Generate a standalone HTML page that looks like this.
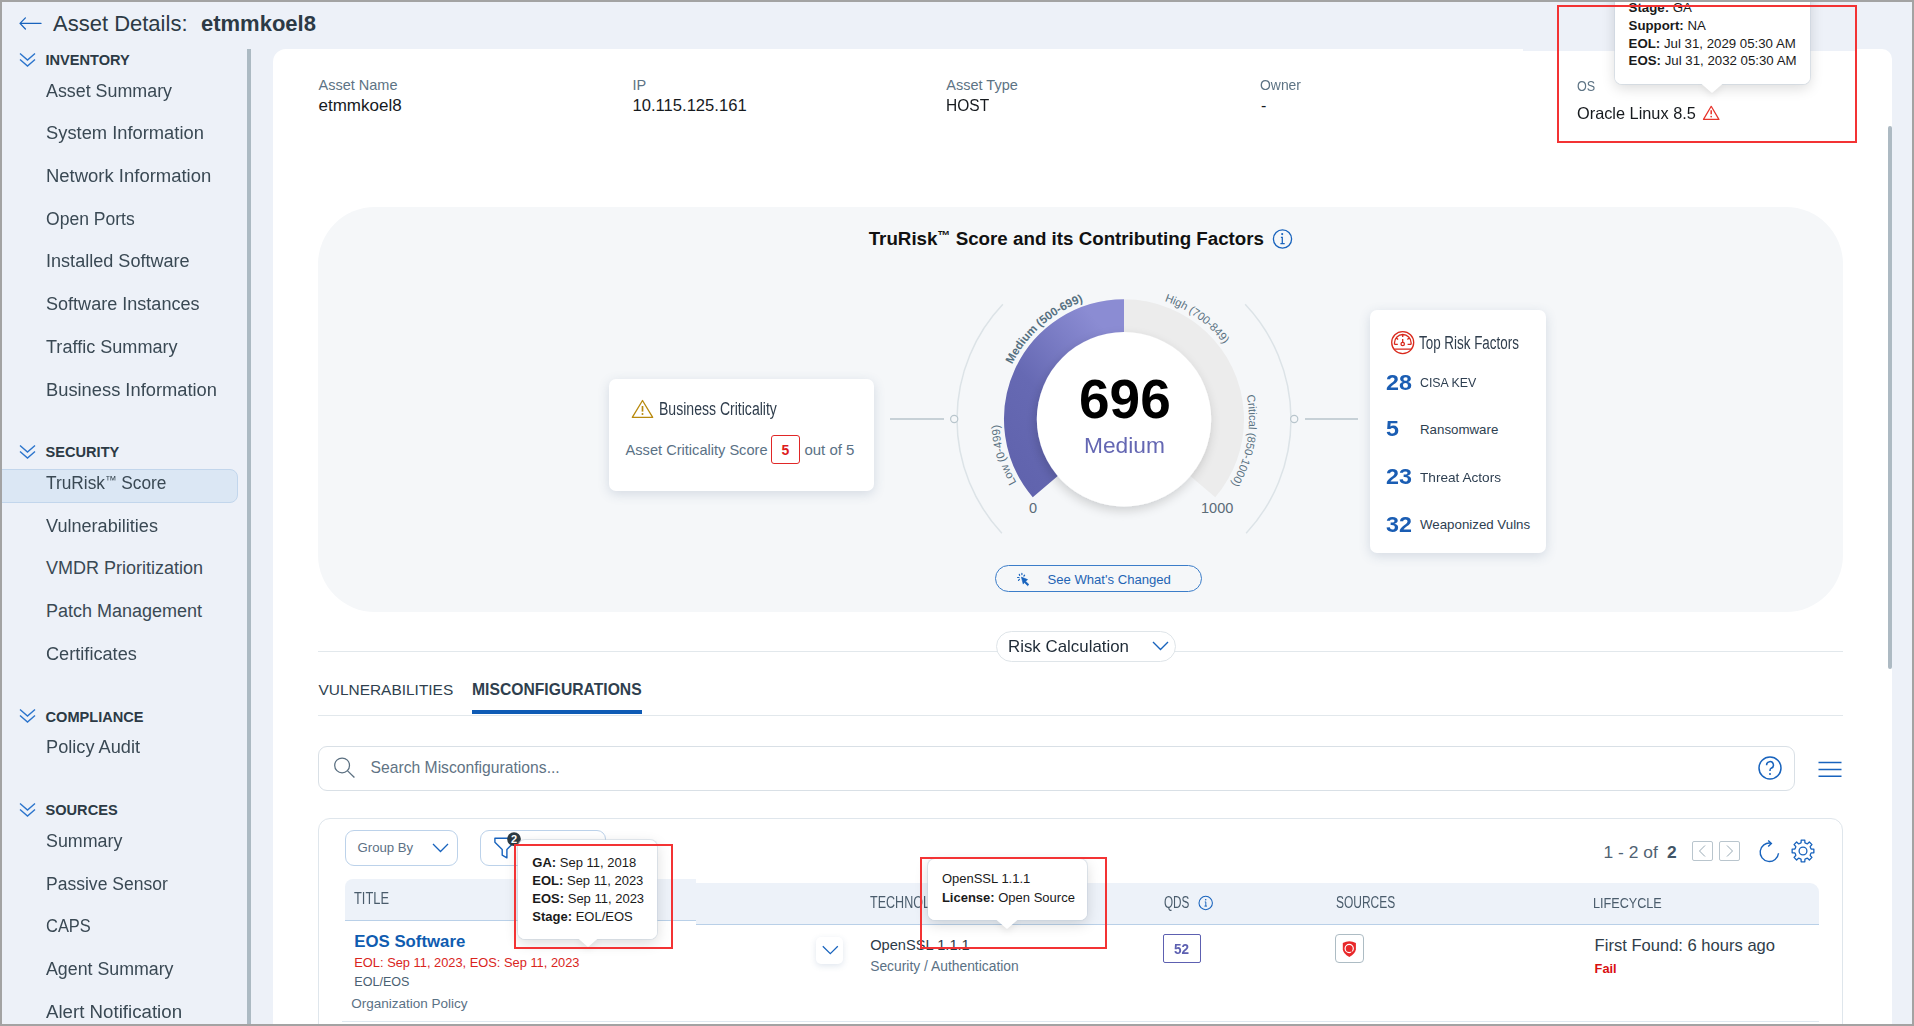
<!DOCTYPE html>
<html><head><meta charset="utf-8"><title>Asset Details</title>
<style>
html,body{margin:0;padding:0;}
body{width:1914px;height:1026px;overflow:hidden;position:relative;font-family:"Liberation Sans",sans-serif;background:#edf1f8;}
.t{position:absolute;line-height:1;white-space:nowrap;}
.r{position:absolute;}
svg{overflow:visible;}
svg text{font-family:"Liberation Sans",sans-serif;}
</style></head><body>
<div class="r" style="left:0px;top:0px;width:1914px;height:1026px;background:#edf1f8;"></div>
<svg class="r" style="left:18px;top:15px;" width="26" height="18" viewBox="0 0 26 18"><path d="M2.2 8.4H23M7.4 2.9L2 8.4L7.4 14" fill="none" stroke="#1863bd" stroke-width="1.25" stroke-linecap="round" stroke-linejoin="round"/></svg>
<div class="t " style="left:53px;top:13.00px;font-size:22px;color:#2c3a45;">Asset Details:</div>
<div class="t " style="left:201px;top:13.00px;font-size:22px;color:#2c3a45;font-weight:700;">etmmkoel8</div>
<div class="r" style="left:247px;top:49px;width:4px;height:980px;background:#acbac3;"></div>
<svg class="r" style="left:19px;top:51.7px;" width="17" height="15" viewBox="0 0 17 15"><path d="M1 1.5L8.5 8L16 1.5M1 7.5L8.5 14L16 7.5" fill="none" stroke="#2b74cc" stroke-width="1.4"/></svg>
<div class="t " style="left:45.5px;top:53.00px;font-size:14.6px;color:#2c3a45;font-weight:700;">INVENTORY</div>
<div class="t " style="left:46px;top:82.00px;font-size:18px;color:#3a4954;transform:scaleX(0.992);transform-origin:0 0;">Asset Summary</div>
<div class="t " style="left:46px;top:124.00px;font-size:18px;color:#3a4954;transform:scaleX(1.018);transform-origin:0 0;">System Information</div>
<div class="t " style="left:46px;top:167.00px;font-size:18px;color:#3a4954;transform:scaleX(1.026);transform-origin:0 0;">Network Information</div>
<div class="t " style="left:46px;top:210.00px;font-size:18px;color:#3a4954;transform:scaleX(0.975);transform-origin:0 0;">Open Ports</div>
<div class="t " style="left:46px;top:252.00px;font-size:18px;color:#3a4954;transform:scaleX(1.004);transform-origin:0 0;">Installed Software</div>
<div class="t " style="left:46px;top:295.00px;font-size:18px;color:#3a4954;transform:scaleX(1.003);transform-origin:0 0;">Software Instances</div>
<div class="t " style="left:46px;top:338.00px;font-size:18px;color:#3a4954;transform:scaleX(1.004);transform-origin:0 0;">Traffic Summary</div>
<div class="t " style="left:46px;top:381.00px;font-size:18px;color:#3a4954;transform:scaleX(1.017);transform-origin:0 0;">Business Information</div>
<svg class="r" style="left:19px;top:443.5px;" width="17" height="15" viewBox="0 0 17 15"><path d="M1 1.5L8.5 8L16 1.5M1 7.5L8.5 14L16 7.5" fill="none" stroke="#2b74cc" stroke-width="1.4"/></svg>
<div class="t " style="left:45.5px;top:445.00px;font-size:14.6px;color:#2c3a45;font-weight:700;">SECURITY</div>
<div class="r" style="left:-6px;top:469px;width:243.5px;height:34px;background:#dbe7f4;border:1px solid #c2d6ec;border-radius:8px;box-sizing:border-box;"></div>
<div class="t " style="left:46px;top:474.00px;font-size:18px;color:#3a4954;transform:scaleX(0.961);transform-origin:0 0;">TruRisk<span style="font-size:12px;position:relative;top:-5px">&#8482;</span> Score</div>
<div class="t " style="left:46px;top:517.00px;font-size:18px;color:#3a4954;transform:scaleX(1.005);transform-origin:0 0;">Vulnerabilities</div>
<div class="t " style="left:46px;top:559.00px;font-size:18px;color:#3a4954;transform:scaleX(1.0);transform-origin:0 0;">VMDR Prioritization</div>
<div class="t " style="left:46px;top:602.00px;font-size:18px;color:#3a4954;transform:scaleX(1.0);transform-origin:0 0;">Patch Management</div>
<div class="t " style="left:46px;top:645.00px;font-size:18px;color:#3a4954;transform:scaleX(1.009);transform-origin:0 0;">Certificates</div>
<svg class="r" style="left:19px;top:708.4000000000001px;" width="17" height="15" viewBox="0 0 17 15"><path d="M1 1.5L8.5 8L16 1.5M1 7.5L8.5 14L16 7.5" fill="none" stroke="#2b74cc" stroke-width="1.4"/></svg>
<div class="t " style="left:45.5px;top:710.00px;font-size:14.6px;color:#2c3a45;font-weight:700;">COMPLIANCE</div>
<div class="t " style="left:46px;top:738.00px;font-size:18px;color:#3a4954;transform:scaleX(1.01);transform-origin:0 0;">Policy Audit</div>
<svg class="r" style="left:19px;top:801.6px;" width="17" height="15" viewBox="0 0 17 15"><path d="M1 1.5L8.5 8L16 1.5M1 7.5L8.5 14L16 7.5" fill="none" stroke="#2b74cc" stroke-width="1.4"/></svg>
<div class="t " style="left:45.5px;top:803.00px;font-size:14.6px;color:#2c3a45;font-weight:700;">SOURCES</div>
<div class="t " style="left:46px;top:832.00px;font-size:18px;color:#3a4954;transform:scaleX(0.991);transform-origin:0 0;">Summary</div>
<div class="t " style="left:46px;top:875.00px;font-size:18px;color:#3a4954;transform:scaleX(0.974);transform-origin:0 0;">Passive Sensor</div>
<div class="t " style="left:46px;top:917.00px;font-size:18px;color:#3a4954;transform:scaleX(0.914);transform-origin:0 0;">CAPS</div>
<div class="t " style="left:46px;top:960.00px;font-size:18px;color:#3a4954;transform:scaleX(0.988);transform-origin:0 0;">Agent Summary</div>
<div class="t " style="left:46px;top:1003.00px;font-size:18px;color:#3a4954;transform:scaleX(1.038);transform-origin:0 0;">Alert Notification</div>
<div class="r" style="left:273px;top:49px;width:1619px;height:1000px;background:#fff;border-radius:13px 10px 0 0;"></div>
<div class="r" style="left:1523px;top:48px;width:334px;height:3px;background:#edf1f8;"></div>
<div class="r" style="left:1888px;top:126px;width:4px;height:543px;background:#adbac3;border-radius:2px;"></div>
<div class="t " style="left:318.5px;top:78.00px;font-size:14.5px;color:#5d7384;">Asset Name</div>
<div class="t " style="left:318.5px;top:97.00px;font-size:17px;color:#161a1e;">etmmkoel8</div>
<div class="t " style="left:632.5px;top:78.00px;font-size:14.5px;color:#5d7384;">IP</div>
<div class="t " style="left:632.5px;top:98.00px;font-size:16.6px;color:#161a1e;">10.115.125.161</div>
<div class="t " style="left:946.3px;top:78.00px;font-size:14.5px;color:#5d7384;">Asset Type</div>
<div class="t " style="left:946px;top:98.00px;font-size:16px;color:#161a1e;transform:scaleX(0.97);transform-origin:0 0;">HOST</div>
<div class="t " style="left:1260px;top:78.00px;font-size:14.5px;color:#5d7384;transform:scaleX(0.96);transform-origin:0 0;">Owner</div>
<div class="t " style="left:1261px;top:98.00px;font-size:16px;color:#161a1e;">-</div>
<div class="t " style="left:1577.4px;top:79.00px;font-size:14px;color:#5d7384;transform:scaleX(0.9);transform-origin:0 0;">OS</div>
<div class="t " style="left:1577.4px;top:105.00px;font-size:16.5px;color:#161a1e;transform:scaleX(0.989);transform-origin:0 0;">Oracle Linux 8.5</div>
<svg class="r" style="left:1702px;top:104px;" width="19" height="17" viewBox="0 0 19 17"><path d="M9.2 2.3L1.5 15.4H16.9Z" fill="none" stroke="#e6332b" stroke-width="1.25" stroke-linejoin="round"/><path d="M9.2 6.3V10.2" stroke="#e6332b" stroke-width="1.5"/><circle cx="9.2" cy="12.6" r="0.85" fill="#e6332b"/></svg>
<div class="r" style="left:318px;top:207px;width:1525px;height:405px;background:#f5f7f9;border-radius:57px;"></div>
<div class="t " style="left:868.7px;top:230.00px;font-size:18.75px;color:#111;font-weight:700;">TruRisk<span style="font-size:13px;position:relative;top:-5px">&#8482;</span> Score and its Contributing Factors</div>
<svg class="r" style="left:1272px;top:229px;" width="21" height="21" viewBox="0 0 21 21"><circle cx="10.5" cy="10" r="9.1" fill="none" stroke="#1863bd" stroke-width="1.3"/><circle cx="10.2" cy="5.1" r="1.05" fill="#1863bd"/><path d="M8.9 8.4H10.3V14.5M8.4 14.5H12.7" fill="none" stroke="#1863bd" stroke-width="1.25"/></svg>
<svg class="r" style="left:0px;top:0px;pointer-events:none;" width="1914" height="1026" viewBox="0 0 1914 1026"><defs><linearGradient id="pg" x1="0" y1="1" x2="0.7" y2="0"><stop offset="0" stop-color="#6063ad"/><stop offset="0.45" stop-color="#6669b3"/><stop offset="1" stop-color="#8b8cd3"/></linearGradient><filter id="sh" x="-30%" y="-30%" width="160%" height="160%"><feGaussianBlur in="SourceAlpha" stdDeviation="5.5"/><feOffset dx="-1.5" dy="4"/><feComponentTransfer><feFuncA type="linear" slope="0.17"/></feComponentTransfer><feMerge><feMergeNode/><feMergeNode in="SourceGraphic"/></feMerge></filter></defs><path d="M1001.86 533.19A167 167 0 0 1 1002.86 304.34" fill="none" stroke="#dce3e7" stroke-width="1.5"/><path d="M1245.14 304.34A167 167 0 0 1 1246.14 533.19" fill="none" stroke="#dce3e7" stroke-width="1.5"/><path d="M890 419H944M1305 419H1358" stroke="#b8c5cc" stroke-width="1.5"/><circle cx="954.2" cy="419" r="3.6" fill="#f5f7f9" stroke="#b8c5cc" stroke-width="1.2"/><circle cx="1294.2" cy="419" r="3.6" fill="#f5f7f9" stroke="#b8c5cc" stroke-width="1.2"/><path d="M1045.68 486.19A103 103 0 1 1 1202.32 486.19" fill="none" stroke="#ececec" stroke-width="34"/><path d="M1045.68 486.19A103 103 0 0 1 1124.00 316.30" fill="none" stroke="url(#pg)" stroke-width="34"/><circle cx="1124" cy="419.3" r="87.2" fill="#fff" filter="url(#sh)"/><path id="pl" d="M1094.87 540.65A124.8 124.8 0 0 1 1033.47 333.39" fill="none"/><text font-size="11.4" font-weight="400" fill="#5a7282"><textPath href="#pl" startOffset="50%" text-anchor="middle">Low (0-499)</textPath></text><path id="pm" d="M1002.00 444.12A124.5 124.5 0 0 1 1163.50 301.23" fill="none"/><text font-size="11.6" font-weight="700" fill="#557080"><textPath href="#pm" startOffset="50%" text-anchor="middle">Medium (500-699)</textPath></text><path id="ph" d="M1073.16 305.11A125 125 0 0 1 1248.32 432.37" fill="none"/><text font-size="11.2" font-weight="400" fill="#5a7282"><textPath href="#ph" startOffset="50%" text-anchor="middle">High (700-849)</textPath></text><path id="pc" d="M1204.35 323.54A125 125 0 0 1 1166.75 536.76" fill="none"/><text font-size="11.2" font-weight="400" fill="#5a7282"><textPath href="#pc" startOffset="50%" text-anchor="middle">Critical (850-1000)</textPath></text></svg>
<div class="t " style="left:1079px;top:372.00px;font-size:55px;color:#000;font-weight:700;transform:scaleX(1.0);transform-origin:0 0;">696</div>
<div class="t " style="left:1083.8px;top:435.00px;font-size:22.3px;color:#6467b3;transform:scaleX(1.02);transform-origin:0 0;">Medium</div>
<div class="t " style="left:1029px;top:501.00px;font-size:14.5px;color:#5b6b78;">0</div>
<div class="t " style="left:1201px;top:501.00px;font-size:14.5px;color:#5b6b78;">1000</div>
<div class="r" style="left:609px;top:379px;width:265px;height:112px;background:#fff;border-radius:7px;box-shadow:0 3px 12px rgba(60,90,130,0.18);"></div>
<svg class="r" style="left:631px;top:399px;" width="23" height="20" viewBox="0 0 23 20"><path d="M11.5 1.5L1.3 18.3H21.7Z" fill="none" stroke="#b8890c" stroke-width="1.3" stroke-linejoin="round"/><path d="M11.5 7V12.6" stroke="#b8890c" stroke-width="1.7"/><circle cx="11.5" cy="15" r="1" fill="#b8890c"/></svg>
<div class="t " style="left:659.2px;top:400.00px;font-size:18.8px;color:#2f3d4c;transform:scaleX(0.748);transform-origin:0 0;">Business Criticality</div>
<div class="t " style="left:625.6px;top:443.00px;font-size:14.6px;color:#5a7185;">Asset Criticality Score</div>
<div class="r" style="left:771px;top:435px;width:29px;height:29px;border:1px solid #e02727;border-radius:3px;box-sizing:border-box;"></div>
<div class="t " style="left:781.5px;top:443.00px;font-size:14px;color:#dd1c1c;font-weight:700;">5</div>
<div class="t " style="left:804.4px;top:442.00px;font-size:15px;color:#5a7185;">out of 5</div>
<div class="r" style="left:1370px;top:310px;width:176px;height:243px;background:#fff;border-radius:7px;box-shadow:0 3px 12px rgba(60,90,130,0.18);"></div>
<svg class="r" style="left:1386px;top:326px;" width="34" height="32" viewBox="0 0 34 32"><g fill="none" stroke="#d9291c" stroke-width="1.3"><circle cx="16.7" cy="16.6" r="11"/><path d="M8.5 18.4V16.8A8.3 8.3 0 0 1 25.1 16.8V18.4M8.5 18.4H11.8M21.6 18.4H25.1M16.7 9V11M10.4 11.9L12.1 13.4M23.1 11.9L21.4 13.4M16.7 13.1V16.1M8.4 23.1H25"/><circle cx="16.7" cy="18" r="1.7"/></g></svg>
<div class="t " style="left:1419.2px;top:333.00px;font-size:19.2px;color:#2f3d4c;transform:scaleX(0.699);transform-origin:0 0;">Top Risk Factors</div>
<div class="t " style="left:1386px;top:372.00px;font-size:21.2px;color:#1a5db3;font-weight:700;transform:scaleX(1.1);transform-origin:0 0;">28</div>
<div class="t " style="left:1420px;top:376.00px;font-size:13.3px;color:#2d3e50;transform:scaleX(0.93);transform-origin:0 0;">CISA KEV</div>
<div class="t " style="left:1386px;top:418.00px;font-size:21.2px;color:#1a5db3;font-weight:700;transform:scaleX(1.1);transform-origin:0 0;">5</div>
<div class="t " style="left:1420px;top:423.00px;font-size:13.3px;color:#2d3e50;transform:scaleX(1.0);transform-origin:0 0;">Ransomware</div>
<div class="t " style="left:1386px;top:466.00px;font-size:21.2px;color:#1a5db3;font-weight:700;transform:scaleX(1.1);transform-origin:0 0;">23</div>
<div class="t " style="left:1420px;top:471.00px;font-size:13.3px;color:#2d3e50;transform:scaleX(1.025);transform-origin:0 0;">Threat Actors</div>
<div class="t " style="left:1386px;top:514.00px;font-size:21.2px;color:#1a5db3;font-weight:700;transform:scaleX(1.1);transform-origin:0 0;">32</div>
<div class="t " style="left:1420px;top:518.00px;font-size:13.3px;color:#2d3e50;">Weaponized Vulns</div>
<div class="r" style="left:995px;top:565px;width:207px;height:27px;border:1.5px solid #3b7dc9;border-radius:14px;box-sizing:border-box;"></div>
<svg class="r" style="left:1010px;top:566px;" width="30" height="26" viewBox="0 0 30 26"><path d="M11.4 11.1L17.6 13.6L15.6 15.3L18.9 18.5L17.6 19.7L14.4 16.5L13.2 18.1Z" fill="#1863bd" stroke="#1863bd" stroke-width="0.6" stroke-linejoin="round"/><path d="M9.3 8.3L9.6 9.4M11.9 7.4V8.6M14.6 9.2L13.9 10M7.6 11.5H9M9.4 13.3L8.5 14.3" stroke="#1863bd" stroke-width="1.2" stroke-linecap="round"/></svg>
<div class="t " style="left:1047.5px;top:573.00px;font-size:13.1px;color:#1f64b4;">See What&#39;s Changed</div>
<div class="r" style="left:318px;top:651px;width:1525px;height:1px;background:#e2e8ec;"></div>
<div class="r" style="left:996px;top:631px;width:180px;height:31px;background:#fff;border:1px solid #dfe5e9;border-radius:16px;box-sizing:border-box;"></div>
<div class="t " style="left:1008.2px;top:639.00px;font-size:16.6px;color:#1e2a36;transform:scaleX(1.017);transform-origin:0 0;">Risk Calculation</div>
<svg class="r" style="left:1151px;top:640px;" width="19" height="12" viewBox="0 0 19 12"><path d="M2 2L9.5 9.5L17 2" fill="none" stroke="#1863bd" stroke-width="1.35"/></svg>
<div class="t " style="left:318.5px;top:682.00px;font-size:15.45px;color:#2f3f4e;">VULNERABILITIES</div>
<div class="t " style="left:472px;top:682.00px;font-size:15.7px;color:#2f3f4e;font-weight:700;">MISCONFIGURATIONS</div>
<div class="r" style="left:472px;top:710px;width:170px;height:4px;background:#0f5bb5;"></div>
<div class="r" style="left:318px;top:715px;width:1525px;height:1px;background:#e2e8ec;"></div>
<div class="r" style="left:318px;top:746px;width:1477px;height:45px;border:1px solid #d9e0e6;border-radius:9px;box-sizing:border-box;"></div>
<svg class="r" style="left:333px;top:756px;" width="24" height="24" viewBox="0 0 24 24"><circle cx="9.1" cy="9.4" r="7.4" fill="none" stroke="#5a6f80" stroke-width="1.25"/><path d="M14.6 14.9L21.4 21.5" stroke="#5a6f80" stroke-width="1.3"/></svg>
<div class="t " style="left:370.5px;top:760.00px;font-size:15.7px;color:#5f7384;">Search Misconfigurations...</div>
<svg class="r" style="left:1757px;top:755px;" width="26" height="26" viewBox="0 0 26 26"><circle cx="13" cy="13" r="11" fill="none" stroke="#1863bd" stroke-width="1.5"/><path d="M9.6 10.2A3.4 3.4 0 1 1 14.2 13.2C13.3 13.7 13 14.2 13 15.4V16" fill="none" stroke="#1863bd" stroke-width="1.5"/><circle cx="13" cy="19" r="1" fill="#1863bd"/></svg>
<svg class="r" style="left:1817px;top:760px;" width="26" height="19" viewBox="0 0 26 19"><path d="M1.5 2.5H24.5M1.5 9.4H24.5M1.5 16.2H24.5" stroke="#1863bd" stroke-width="1.45"/></svg>
<div class="r" style="left:318px;top:818px;width:1525px;height:260px;border:1px solid #dfe6ec;border-radius:12px;box-sizing:border-box;"></div>
<div class="r" style="left:345px;top:830px;width:113px;height:36px;border:1px solid #bcd2ea;border-radius:9px;box-sizing:border-box;"></div>
<div class="t " style="left:357.5px;top:841.00px;font-size:13.2px;color:#5c7185;">Group By</div>
<svg class="r" style="left:431px;top:842.4px;" width="19" height="12" viewBox="0 0 19 12"><path d="M2 2L9.5 9.5L17 2" fill="none" stroke="#1863bd" stroke-width="1.3"/></svg>
<div class="r" style="left:480px;top:830px;width:126px;height:36px;border:1px solid #bcd2ea;border-radius:9px;box-sizing:border-box;"></div>
<svg class="r" style="left:491px;top:834px;" width="26" height="28" viewBox="0 0 26 28"><path d="M3.9 4.2V8.3L11.2 15.4V21.2L15.9 23.8V15.4L23 8.4V4.2Z" fill="none" stroke="#1863bd" stroke-width="1.4" stroke-linejoin="round"/></svg>
<svg class="r" style="left:505px;top:830px;" width="18" height="18" viewBox="0 0 18 18"><circle cx="9" cy="9.1" r="6.9" fill="#2d3a42"/><text x="9" y="13.1" font-size="11" font-weight="700" fill="#fff" text-anchor="middle">2</text></svg>
<div class="r" style="left:345px;top:879px;width:351px;height:42px;background:#edf2f9;border-bottom:1px solid #b9d0e8;border-radius:8px 0 0 0;box-sizing:border-box;"></div>
<div class="r" style="left:696px;top:883px;width:1123px;height:42px;background:#edf2f9;border-bottom:1px solid #b9d0e8;border-radius:0 9px 0 0;box-sizing:border-box;"></div>
<div class="t " style="left:354.4px;top:891.00px;font-size:15.9px;color:#4a5c6c;transform:scaleX(0.808);transform-origin:0 0;">TITLE</div>
<div class="t " style="left:870.2px;top:895.00px;font-size:15.9px;color:#4a5c6c;transform:scaleX(0.79);transform-origin:0 0;">TECHNOLOGY</div>
<div class="t " style="left:1163.7px;top:895.00px;font-size:15.6px;color:#4a5c6c;transform:scaleX(0.752);transform-origin:0 0;">QDS</div>
<svg class="r" style="left:1197px;top:894px;" width="18" height="18" viewBox="0 0 18 18"><circle cx="8.7" cy="9" r="6.7" fill="none" stroke="#1863bd" stroke-width="1.05"/><circle cx="8.7" cy="5.7" r="0.75" fill="#1863bd"/><path d="M7.8 7.9H8.8V12.1M7.4 12.1H10" fill="none" stroke="#1863bd" stroke-width="0.95"/></svg>
<div class="t " style="left:1335.5px;top:895.00px;font-size:15.6px;color:#4a5c6c;transform:scaleX(0.768);transform-origin:0 0;">SOURCES</div>
<div class="t " style="left:1593.4px;top:895.00px;font-size:15.5px;color:#4a5c6c;transform:scaleX(0.815);transform-origin:0 0;">LIFECYCLE</div>
<div class="t " style="left:1603.6px;top:844.00px;font-size:17.4px;color:#4f6272;">1 - 2 of</div>
<div class="t " style="left:1667px;top:844.00px;font-size:17.4px;color:#415566;font-weight:700;">2</div>
<div class="r" style="left:1692px;top:841px;width:21px;height:20px;border:1px solid #b9c5cd;border-radius:2px;box-sizing:border-box;"></div>
<svg class="r" style="left:1692px;top:841px;" width="21" height="20" viewBox="0 0 21 20"><path d="M13 4.5L7.5 10L13 15.5" fill="none" stroke="#98a9b4" stroke-width="1.0"/></svg>
<div class="r" style="left:1719px;top:841px;width:21px;height:20px;border:1px solid #b9c5cd;border-radius:2px;box-sizing:border-box;"></div>
<svg class="r" style="left:1719px;top:841px;" width="21" height="20" viewBox="0 0 21 20"><path d="M8 4.5L13.5 10L8 15.5" fill="none" stroke="#98a9b4" stroke-width="1.0"/></svg>
<svg class="r" style="left:1754px;top:834px;" width="30" height="30" viewBox="0 0 30 30"><g fill="none" stroke="#1863bd" stroke-width="1.4"><path d="M24.5 19.2A9.2 9.2 0 1 1 16.8 9.2"/><path d="M14.2 6.4L17.4 9.4L14.2 12.6"/></g></svg>
<svg class="r" style="left:1791.2px;top:838.7px;" width="24" height="24" viewBox="0 0 24 24"><path d="M9.40 4.22L10.09 3.72L10.18 1.15L13.82 1.15L13.91 3.72L14.60 4.22L15.66 4.66L16.50 4.79L18.39 3.04L20.96 5.61L19.21 7.50L19.34 8.34L19.78 9.40L20.28 10.09L22.85 10.18L22.85 13.82L20.28 13.91L19.78 14.60L19.34 15.66L19.21 16.50L20.96 18.39L18.39 20.96L16.50 19.21L15.66 19.34L14.60 19.78L13.91 20.28L13.82 22.85L10.18 22.85L10.09 20.28L9.40 19.78L8.34 19.34L7.50 19.21L5.61 20.96L3.04 18.39L4.79 16.50L4.66 15.66L4.22 14.60L3.72 13.91L1.15 13.82L1.15 10.18L3.72 10.09L4.22 9.40L4.66 8.34L4.79 7.50L3.04 5.61L5.61 3.04L7.50 4.79L8.34 4.66Z" fill="none" stroke="#1863bd" stroke-width="1.3" stroke-linejoin="round"/><circle cx="12" cy="12" r="3.9" fill="none" stroke="#1863bd" stroke-width="1.3"/></svg>
<div class="t " style="left:354.3px;top:934.00px;font-size:16.8px;color:#0f5cb0;font-weight:700;">EOS Software</div>
<div class="t " style="left:354.3px;top:957.00px;font-size:12.85px;color:#d9251c;">EOL: Sep 11, 2023, EOS: Sep 11, 2023</div>
<div class="t " style="left:354.3px;top:976.00px;font-size:12.55px;color:#4a6072;">EOL/EOS</div>
<div class="t " style="left:351.2px;top:997.00px;font-size:13.5px;color:#5a7185;">Organization Policy</div>
<div class="r" style="left:342px;top:1021px;width:1477px;height:1px;background:#dfe8f0;"></div>
<div class="r" style="left:816px;top:937px;width:27px;height:27px;background:#fff;border-radius:5px;box-shadow:0 2px 6px rgba(60,100,150,0.16);"></div>
<svg class="r" style="left:816px;top:937px;" width="27" height="27" viewBox="0 0 27 27"><path d="M6.8 9.3L14.3 16.6L21.8 9.3" fill="none" stroke="#1863bd" stroke-width="1.3"/></svg>
<div class="t " style="left:870.2px;top:938.00px;font-size:14.65px;color:#2c3a47;">OpenSSL 1.1.1</div>
<div class="t " style="left:870.2px;top:960.00px;font-size:13.85px;color:#5a7185;">Security / Authentication</div>
<div class="r" style="left:1163px;top:934px;width:38px;height:29px;border:1.5px solid #5d60b1;border-radius:2px;box-sizing:border-box;"></div>
<div class="t " style="left:1174.3px;top:942.00px;font-size:14.1px;color:#5d60b1;font-weight:700;transform:scaleX(0.96);transform-origin:0 0;">52</div>
<div class="r" style="left:1335px;top:934px;width:29px;height:29px;border:1.2px solid #adbcc4;border-radius:4px;box-sizing:border-box;"></div>
<svg class="r" style="left:1341px;top:940px;" width="17" height="18" viewBox="0 0 17 18"><path d="M1.8 3Q8.3 -0.3 14.9 3V9.2Q14.6 13.6 8.3 17.1Q2 13.6 1.8 9.2Z" fill="#e8282a"/><circle cx="8.2" cy="8.5" r="4.1" fill="none" stroke="#fff" stroke-width="1.2"/><path d="M10.2 11.6L12.2 13" stroke="#e8282a" stroke-width="1.4"/></svg>
<div class="t " style="left:1594.6px;top:938.00px;font-size:16.57px;color:#2f3d4a;">First Found: 6 hours ago</div>
<div class="t " style="left:1594.6px;top:963.00px;font-size:12.8px;color:#d90f0f;font-weight:700;">Fail</div>
<div class="r" style="left:1615px;top:-20px;width:195px;height:104px;background:#fff;border-radius:7px;box-shadow:0 0 0 1px rgba(200,212,222,0.55),0 4px 14px rgba(0,0,0,0.15);"></div>
<svg class="r" style="left:1701px;top:82.8px;filter:drop-shadow(0 3px 3px rgba(0,0,0,0.08));" width="22" height="11" viewBox="0 0 22 11"><path d="M0 0.5L11 10L22 0.5Z" fill="#fff"/></svg>
<div class="r" style="left:1615px;top:70px;width:195px;height:14px;background:#fff;border-radius:0 0 7px 7px;"></div>
<div class="t" style="left:1628.6px;top:1px;font-size:13.25px;color:#1a1a1a;"><b>Stage:</b> GA</div>
<div class="t" style="left:1628.6px;top:19px;font-size:13.25px;color:#1a1a1a;"><b>Support:</b> NA</div>
<div class="t" style="left:1628.6px;top:37px;font-size:13.25px;color:#1a1a1a;"><b>EOL:</b> Jul 31, 2029 05:30 AM</div>
<div class="t" style="left:1628.6px;top:54px;font-size:13.25px;color:#1a1a1a;"><b>EOS:</b> Jul 31, 2032 05:30 AM</div>
<div class="r" style="left:517.7px;top:839.5px;width:139px;height:99.5px;background:#fff;border-radius:7px;box-shadow:0 0 0 1px rgba(200,212,222,0.55),0 4px 14px rgba(0,0,0,0.15);"></div>
<svg class="r" style="left:576.5px;top:936.6px;filter:drop-shadow(0 3px 3px rgba(0,0,0,0.08));" width="22" height="11" viewBox="0 0 22 11"><path d="M0 0.5L11 10L22 0.5Z" fill="#fff"/></svg>
<div class="r" style="left:517.7px;top:920px;width:139px;height:19px;background:#fff;border-radius:0 0 7px 7px;"></div>
<div class="t" style="left:532.3px;top:856px;font-size:13px;color:#1a1a1a;"><b>GA:</b> Sep 11, 2018</div>
<div class="t" style="left:532.3px;top:874px;font-size:13px;color:#1a1a1a;"><b>EOL:</b> Sep 11, 2023</div>
<div class="t" style="left:532.3px;top:892px;font-size:13px;color:#1a1a1a;"><b>EOS:</b> Sep 11, 2023</div>
<div class="t" style="left:532.3px;top:910px;font-size:13px;color:#1a1a1a;"><b>Stage:</b> EOL/EOS</div>
<div class="r" style="left:928px;top:859px;width:159px;height:61px;background:#fff;border-radius:7px;box-shadow:0 0 0 1px rgba(200,212,222,0.55),0 4px 14px rgba(0,0,0,0.15);"></div>
<svg class="r" style="left:996.3px;top:918.9px;filter:drop-shadow(0 3px 3px rgba(0,0,0,0.08));" width="22" height="11" viewBox="0 0 22 11"><path d="M0 0.5L11 10L22 0.5Z" fill="#fff"/></svg>
<div class="r" style="left:928px;top:905px;width:159px;height:15px;background:#fff;border-radius:0 0 7px 7px;"></div>
<div class="t" style="left:941.9px;top:872px;font-size:13px;color:#1a1a1a;">OpenSSL 1.1.1</div>
<div class="t" style="left:941.9px;top:891px;font-size:13px;color:#1a1a1a;"><b>License:</b> Open Source</div>
<div class="r" style="left:1557px;top:5px;width:300px;height:138px;border:2px solid #f33334;box-sizing:border-box;"></div>
<div class="r" style="left:514px;top:844px;width:159px;height:105px;border:2px solid #f33334;box-sizing:border-box;"></div>
<div class="r" style="left:920px;top:857px;width:187px;height:92px;border:2px solid #f33334;box-sizing:border-box;"></div>
<div class="r" style="left:0px;top:0px;width:1914px;height:1026px;border:2px solid #a3a3a3;box-sizing:border-box;"></div>
</body></html>
